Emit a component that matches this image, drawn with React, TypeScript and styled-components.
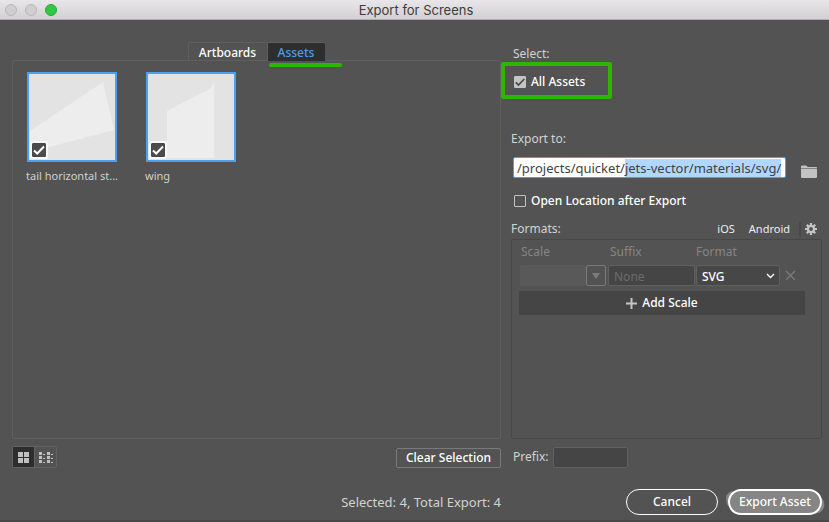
import React, { useEffect, useRef, useState } from 'react';
import styled, { createGlobalStyle } from 'styled-components';

const GlobalStyle = createGlobalStyle`
  *, *::before, *::after { box-sizing: border-box; }
  body { margin: 0; background: #535353; }
  body, button, input, select {
    font-family: "Noto Sans", "Open Sans", sans-serif;
    font-size: 12px;
    line-height: 16px;
  }
  button, input, select { margin: 0; padding: 0; color: inherit; }
`;

const Dialog = styled.div`
  display: flex;
  flex-direction: column;
  min-height: 100vh;
  color: #fff;
  background: #535353;
  border-bottom: 2px solid #484848;
`;

const TitleBar = styled.header`
  display: flex;
  align-items: center;
  height: 20px;
  padding: 0 2px 0 5px;
  background: linear-gradient(#e8e6e8, #d2d0d2);
  border-bottom: 1px solid #b0aeb0;
`;

const Lights = styled.div`
  display: flex;
  flex: 1;
  gap: 8px;
`;

const Light = styled.button<{ $on?: boolean }>`
  width: 12px;
  height: 12px;
  border: 1px solid ${(p) => (p.$on ? '#27a833' : '#b9b7b9')};
  border-radius: 50%;
  background: ${(p) => (p.$on ? '#33c748' : '#d0ced0')};
`;

const Title = styled.h1`
  margin: 0;
  color: #3c3c3c;
  font: 400 13px/18px Inter, sans-serif;
`;

const TitleSpace = styled.div`
  flex: 1;
`;

const Body = styled.main`
  display: grid;
  flex: 1;
  grid-template-columns: minmax(0, 1fr) 311px;
  column-gap: 10px;
  padding: 22px 7px 0 12px;
`;

const Column = styled.section`
  display: flex;
  flex-direction: column;
  min-width: 0;
`;

const Tabs = styled.div`
  display: flex;
  align-self: center;
  position: relative;
`;

const Tab = styled.button<{ $active?: boolean }>`
  width: ${(p) => (p.$active ? '58px' : '79px')};
  height: 19px;
  padding: 2px 1px 0 0;
  border: 1px solid #5f5f5f;
  border-width: 1px 0 0 1px;
  border-radius: 2px 2px 0 0;
  font-weight: 500;
  color: ${(p) => (p.$active ? '#4a9fe8' : '#fff')};
  background: ${(p) => (p.$active ? '#2e2e2e' : 'transparent')};
`;

const MarkerLine = styled.span`
  position: absolute;
  top: 21px;
  left: 81px;
  width: 73px;
  height: 4px;
  border-radius: 2px;
  background: #2eb500;
`;

const AssetPanel = styled.div`
  display: flex;
  flex: 1;
  align-items: flex-start;
  gap: 28px;
  padding: 11px 13px;
  border: 1px solid #5f5f5f;
  border-radius: 2px;
  margin-top: -1px;
`;

const Asset = styled.label`
  width: 91px;
`;

const Thumb = styled.div`
  position: relative;
  width: 90px;
  height: 90px;
  margin: 0 0 7px 1px;
  border: 2px solid #4ba0f0;
  background: #e3e3e3;
`;

const Art = styled.svg`
  display: block;
  width: 86px;
  height: 86px;
`;

const ThumbCheck = styled.span`
  position: absolute;
  left: 1px;
  bottom: 1px;
  display: flex;
  padding: 2px;
  border-radius: 2px;
  background: #f8f8f8;
`;

const AssetName = styled.span`
  display: block;
  color: #d0d0d0;
  font-size: 11px;
  line-height: 14px;
  white-space: nowrap;
`;

const CheckWrap = styled.span`
  display: grid;
  > * { grid-area: 1 / 1; }
  svg { pointer-events: none; }
`;

const CheckInput = styled.input<{ $kind: 'dark' | 'light' | 'empty' }>`
  appearance: none;
  width: ${(p) => (p.$kind === 'dark' ? '14px' : '12px')};
  height: ${(p) => (p.$kind === 'dark' ? '14px' : '12px')};
  border: 1px solid ${(p) => (p.$kind === 'dark' ? '#484848' : '#c4c4c4')};
  border-radius: 1px;
  background: ${(p) => (p.$kind === 'dark' ? '#4c4c4c' : p.$kind === 'light' ? '#c4c4c4' : 'transparent')};
`;

const LeftTools = styled.div`
  display: flex;
  justify-content: space-between;
  align-items: flex-end;
  height: 22px;
  margin-top: 7px;
`;

const ViewSwitch = styled.div`
  display: flex;
  border: 1px solid #626262;
  border-radius: 2px;
`;

const ViewButton = styled.button<{ $active?: boolean }>`
  display: flex;
  align-items: center;
  justify-content: center;
  width: ${(p) => (p.$active ? '21px' : '22px')};
  height: 20px;
  border: 0;
  background: ${(p) => (p.$active ? '#2e2e2e' : 'transparent')};
  & + & { border-left: 1px solid #626262; }
`;

const ClearButton = styled.button`
  width: 105px;
  height: 20px;
  border: 1px solid #7a7a7a;
  border-radius: 2px;
  background: transparent;
  font-weight: 500;
  line-height: 18px;
`;

const Label = styled.span`
  color: #d2d2d2;
`;

const SelectGroup = styled.div`
  display: flex;
  flex-direction: column;
  align-items: flex-start;
  gap: 12px;
  padding: 4px 0 0 2px;
`;

const CheckRow = styled.label`
  display: flex;
  position: relative;
  align-items: center;
  gap: 5px;
  height: 16px;
  padding-left: 1px;
  font-weight: 500;
`;

const MarkerBox = styled.span`
  position: absolute;
  inset: -12px -27px -9px -12px;
  border: 4px solid #2eb500;
  border-radius: 2px;
  pointer-events: none;
`;

const ExportTo = styled.label`
  display: block;
  margin: 41px 0 10px;
  color: #d2d2d2;
`;

const PathRow = styled.div`
  display: flex;
  align-items: flex-end;
  justify-content: space-between;
  padding: 0 5px 0 2px;
`;

const PathInput = styled.input`
  width: 273px;
  height: 21px;
  padding: 1px 3px;
  border: 1px solid #4ba0f0;
  border-radius: 2px;
  outline: 0;
  background: #fff;
  color: #424242;
  font-size: 13px;
  &::selection { color: #424242; background: #b2d7fe; }
`;

const IconButton = styled.button`
  display: flex;
  align-items: center;
  justify-content: center;
  border: 0;
  background: transparent;
`;

const OpenRow = styled(CheckRow)`
  margin: 15px 0 0 2px;
`;

const FormatsHead = styled.div`
  display: flex;
  align-items: center;
  height: 18px;
  margin-top: 11px;
  padding-right: 5px;
  ${Label} { flex: 1; }
`;

const Presets = styled.div`
  display: flex;
  gap: 14px;
  margin-right: 9px;
`;

const Preset = styled.button`
  border: 0;
  background: transparent;
  color: #eee;
  font-size: 11px;
`;

const Gear = styled(IconButton)`
  height: 15px;
  padding-left: 4px;
  border-left: 2px solid #494949;
`;

const FormatPanel = styled.div`
  flex: 1;
  margin-top: 1px;
  padding: 4px 16px 0 7px;
  border: 1px solid #484848;
  border-radius: 2px;
`;

const FormatTable = styled.table`
  width: 280px;
  border-collapse: collapse;
  table-layout: fixed;
  th {
    height: 16px;
    padding: 0 0 0 2px;
    color: #858585;
    font-weight: 400;
    text-align: left;
  }
  th:nth-child(3) { padding: 0; }
  td { height: 21px; padding: 5px 0 0; vertical-align: top; }
`;

const ScaleCell = styled.div`
  display: flex;
  padding-left: 1px;
`;

const Field = styled.input`
  height: 21px;
  border: 1px solid #606060;
  border-radius: 2px;
  background: #454545;
  color: #fff;
`;

const ScaleField = styled(Field)`
  width: 66px;
  border-color: #595959;
  background: #595959;
`;

const ScaleButton = styled(IconButton)`
  width: 20px;
  height: 21px;
  border: 1px solid #7a7a7a;
  border-radius: 2px;
`;

const SuffixField = styled(Field)`
  display: block;
  width: 87px;
  padding: 2px 5px 0;
  &::placeholder { color: #6c6c6c; opacity: 1; }
`;

const SelectWrap = styled.div`
  display: grid;
  align-items: center;
  width: 84px;
  > * { grid-area: 1 / 1; }
  svg { justify-self: end; margin-right: 5px; pointer-events: none; }
`;

const FormatSelect = styled.select`
  appearance: none;
  width: 100%;
  height: 21px;
  padding: 2px 5px 0;
  border: 1px solid #606060;
  border-radius: 2px;
  background: #474747;
  color: #fff;
  font-weight: 500;
`;

const RemoveButton = styled(IconButton)`
  height: 21px;
  padding-left: 5px;
`;

const AddScale = styled.button`
  display: flex;
  align-items: center;
  justify-content: center;
  gap: 5px;
  width: 100%;
  height: 24px;
  margin-top: 5px;
  border: 0;
  background: #454545;
  font-weight: 500;
`;

const PrefixRow = styled.label`
  display: flex;
  align-items: center;
  gap: 4px;
  height: 22px;
  margin-top: 7px;
  padding-left: 2px;
`;

const PrefixField = styled(Field)`
  width: 75px;
`;

const Footer = styled.footer`
  display: grid;
  grid-template-columns: minmax(0, 1fr) 311px;
  column-gap: 10px;
  align-items: center;
  padding: 21px 7px 5px 12px;
`;

const Status = styled.div`
  color: #d2d2d2;
  font-size: 13px;
  text-align: right;
`;

const Actions = styled.div`
  display: flex;
  justify-content: flex-end;
  gap: 10px;
`;

const PillButton = styled.button<{ $primary?: boolean }>`
  position: relative;
  width: ${(p) => (p.$primary ? '94px' : '92px')};
  height: 26px;
  border: ${(p) => (p.$primary ? '2px' : '1px')} solid #fff;
  border-radius: 13px;
  background: ${(p) => (p.$primary ? '#858585' : 'transparent')};
  font-weight: 500;
`;

const PrimaryWrap = styled.div`
  position: relative;
`;

const Highlight = styled.svg`
  position: absolute;
  top: 0;
  left: -2px;
  overflow: visible;
`;

type CheckKind = 'dark' | 'light' | 'empty';

function Check({ kind }: { kind: CheckKind }) {
  const [on, setOn] = useState(kind !== 'empty');
  const size = kind === 'dark' ? 14 : 12;
  return (
    <CheckWrap>
      <CheckInput type="checkbox" $kind={kind} checked={on} onChange={() => setOn(!on)} />
      {on && (
        <svg width={size} height={size} viewBox="0 0 14 14" fill="none" stroke={kind === 'dark' ? '#fff' : '#4a4a4a'} strokeWidth="2">
          <path d="M2 7.5 5.2 10.5 12 3.5" />
        </svg>
      )}
    </CheckWrap>
  );
}

const assets = [
  { name: 'tail horizontal st...', path: 'M1 57 74 8 85 56 1 78Z' },
  { name: 'wing', path: 'M19 84V37L60 16Q65 13 66 6V84Z' },
];

export default function App() {
  const pathRef = useRef<HTMLInputElement>(null);

  useEffect(() => {
    const field = pathRef.current;
    if (field) {
      field.focus();
      field.setSelectionRange(18, field.value.length);
    }
  }, []);

  return (
    <>
      <GlobalStyle />
      <Dialog>
        <TitleBar>
          <Lights>
            <Light aria-label="Close" />
            <Light aria-label="Minimize" />
            <Light aria-label="Zoom" $on />
          </Lights>
          <Title>Export for Screens</Title>
          <TitleSpace />
        </TitleBar>

        <Body>
          <Column>
            <Tabs role="tablist">
              <Tab role="tab" aria-selected={false}>Artboards</Tab>
              <Tab role="tab" aria-selected $active>Assets</Tab>
              <MarkerLine />
            </Tabs>
            <AssetPanel>
              {assets.map((asset) => (
                <Asset key={asset.name}>
                  <Thumb>
                    <Art viewBox="0 0 86 86"><path d={asset.path} fill="#ededed" /></Art>
                    <ThumbCheck><Check kind="dark" /></ThumbCheck>
                  </Thumb>
                  <AssetName>{asset.name}</AssetName>
                </Asset>
              ))}
            </AssetPanel>
            <LeftTools>
              <ViewSwitch>
                <ViewButton $active aria-label="Large thumbnails">
                  <svg width="11" height="11" fill="#c0c0c0"><path d="M0 0h5v5H0zM6 0h5v5H6zM0 6h5v5H0zM6 6h5v5H6z" /></svg>
                </ViewButton>
                <ViewButton aria-label="Small thumbnails">
                  <svg width="14" height="11" fill="#c0c0c0">
                    <path d="M0 0h3v3H0zM0 4h3v3H0zM0 8h3v3H0zM8 0h3v3H8zM8 4h3v3H8zM8 8h3v3H8zM4 2h2v1H4zM4 6h2v1H4zM4 10h2v1H4zM12 2h2v1h-2zM12 6h2v1h-2zM12 10h2v1h-2z" />
                  </svg>
                </ViewButton>
              </ViewSwitch>
              <ClearButton>Clear Selection</ClearButton>
            </LeftTools>
          </Column>

          <Column>
            <SelectGroup>
              <Label>Select:</Label>
              <CheckRow>
                <Check kind="light" />
                All Assets
                <MarkerBox />
              </CheckRow>
            </SelectGroup>
            <ExportTo htmlFor="export-path">Export to:</ExportTo>
            <PathRow>
              <PathInput id="export-path" ref={pathRef} defaultValue="/projects/quicket/jets-vector/materials/svg/" />
              <IconButton aria-label="Choose folder">
                <svg width="16" height="13" viewBox="0 0 16 13"><path d="M0 1.5Q0 .5 1 .5H5L7 2H15Q16 2 16 3V12Q16 13 15 13H1Q0 13 0 12Z" fill="#c2c2c2" /><path d="M0 3.5H16" stroke="#858585" /></svg>
              </IconButton>
            </PathRow>
            <OpenRow>
              <Check kind="empty" />
              Open Location after Export
            </OpenRow>
            <FormatsHead>
              <Label>Formats:</Label>
              <Presets>
                <Preset>iOS</Preset>
                <Preset>Android</Preset>
              </Presets>
              <Gear aria-label="Format settings">
                <svg width="12" height="12" viewBox="-6 -6 12 12">
                  <circle r="3" fill="none" stroke="#c6c6c6" strokeWidth="2.2" />
                  <path d="M0-6V-3M0 3V6M-6 0H-3M3 0H6M-4.2-4.2-2.4-2.4M2.4 2.4 4.2 4.2M4.2-4.2 2.4-2.4M-2.4 2.4-4.2 4.2" stroke="#c6c6c6" strokeWidth="2.2" />
                </svg>
              </Gear>
            </FormatsHead>
            <FormatPanel>
              <FormatTable>
                <colgroup>
                  <col width="89" /><col width="88" /><col width="84" /><col width="19" />
                </colgroup>
                <thead>
                  <tr><th>Scale</th><th>Suffix</th><th>Format</th><th aria-label="Remove" /></tr>
                </thead>
                <tbody>
                  <tr>
                    <td>
                      <ScaleCell>
                        <ScaleField aria-label="Scale" disabled />
                        <ScaleButton aria-label="Scale presets">
                          <svg width="8" height="6"><path d="M0 0H8L4 6Z" fill="#7c7c7c" /></svg>
                        </ScaleButton>
                      </ScaleCell>
                    </td>
                    <td><SuffixField aria-label="Suffix" placeholder="None" /></td>
                    <td>
                      <SelectWrap>
                        <FormatSelect aria-label="Format" defaultValue="SVG">
                          <option>SVG</option>
                          <option>PNG</option>
                        </FormatSelect>
                        <svg width="9" height="6" fill="none" stroke="#fff" strokeWidth="1.4"><path d="M1 1 4.5 4.5 8 1" /></svg>
                      </SelectWrap>
                    </td>
                    <td>
                      <RemoveButton aria-label="Remove scale">
                        <svg width="11" height="11" stroke="#7c7c7c" strokeWidth="1.2"><path d="M1 1 10 10M10 1 1 10" /></svg>
                      </RemoveButton>
                    </td>
                  </tr>
                </tbody>
              </FormatTable>
              <AddScale>
                <svg width="11" height="11" stroke="#c6c6c6" strokeWidth="2"><path d="M5.5 0V11M0 5.5H11" /></svg>
                Add Scale
              </AddScale>
            </FormatPanel>
            <PrefixRow>
              <Label>Prefix:</Label>
              <PrefixField />
            </PrefixRow>
          </Column>
        </Body>

        <Footer>
          <Status>Selected: 4, Total Export: 4</Status>
          <Actions>
            <PillButton>Cancel</PillButton>
            <PrimaryWrap>
              <Highlight width="98" height="26" fill="#858585"><path d="M9 2Q0 2 0 10T7 19L85 24Q96 26 98 18T91 6Z" /></Highlight>
              <PillButton $primary>Export Asset</PillButton>
            </PrimaryWrap>
          </Actions>
        </Footer>
      </Dialog>
    </>
  );
}
